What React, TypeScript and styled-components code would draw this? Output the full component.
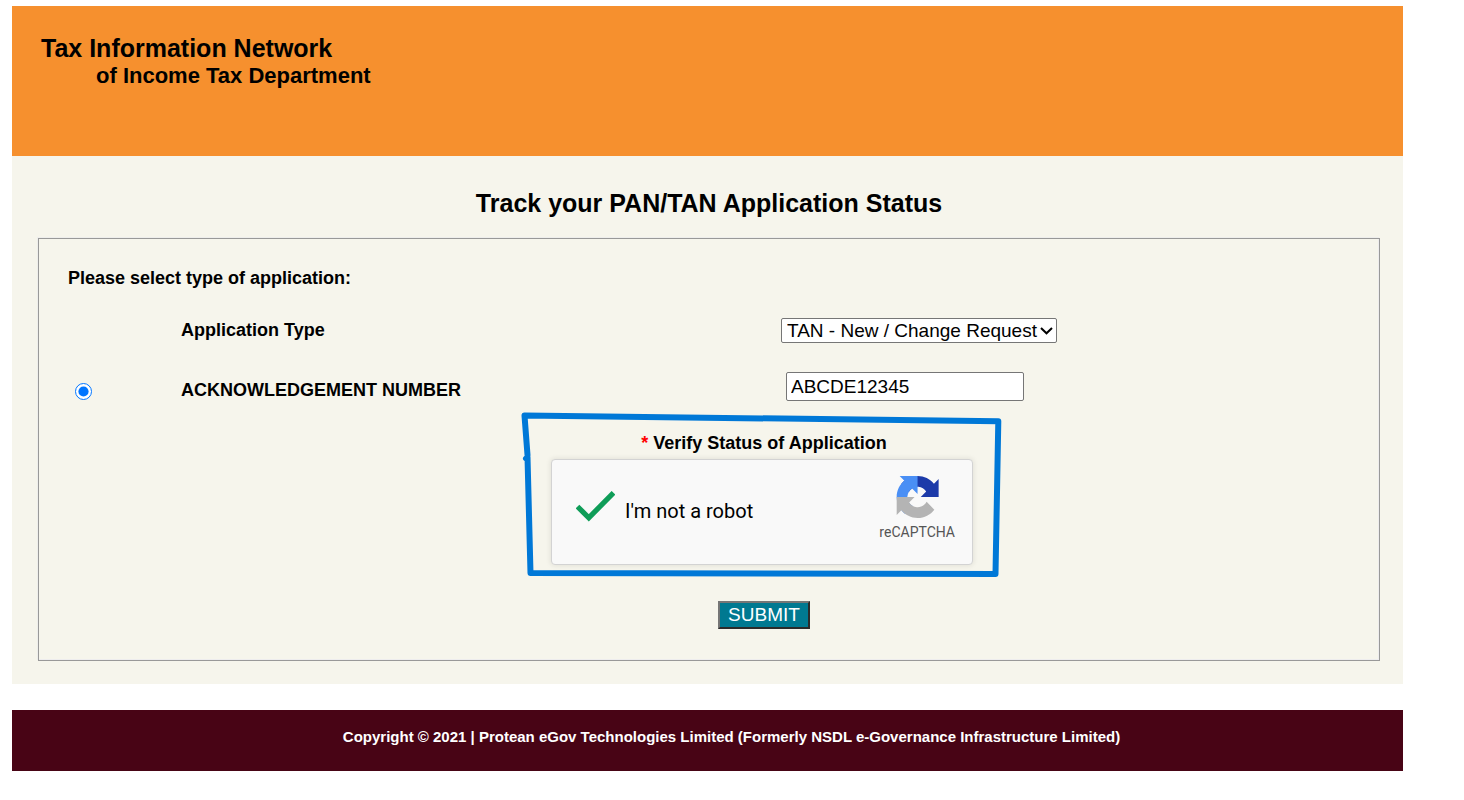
import React, { useState } from "react";
import styled, { createGlobalStyle } from "styled-components";

const GlobalStyle = createGlobalStyle`
  *, *::before, *::after {
    box-sizing: border-box;
  }
  body {
    margin: 0;
    background: #ffffff;
    color: #000000;
    font-family: "Liberation Sans", Arial, sans-serif;
  }
`;

const Page = styled.div`
  padding: 6px 61px 28px 12px;
`;

const Banner = styled.header`
  min-height: 150px;
  padding: 28px 29px;
  background: #f6902e;
  font-weight: bold;
`;

const BannerTitle = styled.div`
  font-size: 25px;
  line-height: 28px;
`;

const BannerSubtitle = styled.div`
  padding-left: 55px;
  font-size: 22px;
  line-height: 28px;
`;

const Main = styled.main`
  padding: 32px 23px 23px 26px;
  background: #f6f5ec;
`;

const PageTitle = styled.h1`
  margin: 0 0 20px;
  font-size: 25px;
  line-height: 30px;
  text-align: center;
`;

const Form = styled.form`
  display: flex;
  flex-direction: column;
  padding: 27px 32px 31px 29px;
  border: 1px solid #999999;
  box-shadow: inset -1px -1px 0 #eeedee, -1px -1px 0 #eeeeec;
`;

const FormTitle = styled.h2`
  margin: 0 0 28px;
  font-size: 18px;
  line-height: 24px;
`;

const Row = styled.div<{ $align: "start" | "end" }>`
  display: grid;
  grid-template-columns: 113px minmax(0, 600px) 1fr;
  align-items: ${({ $align }) => $align};
  margin-bottom: 29px;
`;

const FieldLabel = styled.label`
  grid-column: 2;
  font-size: 18px;
  font-weight: bold;
  line-height: 24px;
`;

const Radio = styled.input`
  width: 17px;
  height: 17px;
  margin: 0 0 2px 7px;
`;

const SelectBox = styled.div`
  position: relative;
  justify-self: start;
  width: 276px;
  height: 25px;
`;

const Select = styled.select`
  display: block;
  width: 100%;
  height: 100%;
  padding: 0 16px 0 5px;
  appearance: none;
  border: 1px solid #767676;
  border-radius: 2px;
  background-color: #ffffff;
  color: #000000;
  font-family: inherit;
  font-size: 19px;
`;

const Chevron = styled.svg`
  position: absolute;
  top: 8px;
  right: 4px;
  width: 14px;
  height: 9px;
  pointer-events: none;
`;

const TextInput = styled.input`
  width: 238px;
  height: 29px;
  margin: 0 0 1px 5px;
  padding: 0 4px;
  border: 1px solid #767676;
  border-radius: 2px;
  background: #ffffff;
  color: #000000;
  font-family: inherit;
  font-size: 19px;
`;

const Verification = styled.div`
  display: flex;
  flex-direction: column;
  align-items: center;
  margin-left: 113px;
`;

const CaptchaGroup = styled.div`
  position: relative;
  width: 426px;
  margin-bottom: 36px;
`;

const CaptchaTitle = styled.p`
  margin: 0 0 4px;
  font-size: 18px;
  font-weight: bold;
  line-height: 24px;
  text-align: center;
`;

const Required = styled.span`
  color: #ff0000;
`;

const CaptchaCard = styled.div`
  display: flex;
  justify-content: space-between;
  width: 422px;
  height: 106px;
  padding: 0 17px 0 24px;
  border: 1px solid #d3d3d3;
  border-radius: 4px;
  background: #f9f9f9;
  box-shadow: 0 0 5px 1px rgba(0, 0, 0, 0.08);
  font-family: Roboto, sans-serif;
`;

const RobotCheck = styled.label`
  display: flex;
  align-items: center;
  gap: 10px;
  padding-bottom: 2px;
  font-size: 20px;
  line-height: 24px;
`;

const HiddenCheckbox = styled.input`
  position: absolute;
  width: 1px;
  height: 1px;
  margin: 0;
  opacity: 0;
`;

const CheckMark = styled.svg<{ $visible: boolean }>`
  width: 39px;
  height: 40px;
  visibility: ${({ $visible }) => ($visible ? "visible" : "hidden")};
`;

const CaptchaBrand = styled.div`
  display: flex;
  flex-direction: column;
  align-items: center;
  gap: 4px;
  padding-top: 16px;
  color: #555555;
  font-size: 14px;
  line-height: 20px;
`;

const BrandLogo = styled.svg`
  width: 42px;
  height: 42px;
`;

const Highlight = styled.svg`
  position: absolute;
  top: -20px;
  left: -30px;
  width: 484px;
  height: 170px;
  pointer-events: none;
`;

const SubmitButton = styled.button`
  width: 92px;
  height: 28px;
  padding: 0;
  border: 2px solid;
  border-color: #767676 #2b2b2b #2b2b2b #767676;
  background: #007991;
  color: #ffffff;
  font-family: inherit;
  font-size: 19px;
  line-height: 24px;
`;

const Footer = styled.footer`
  margin-top: 26px;
  padding: 17px 0 24px 48px;
  background: #480415;
  color: #ffffff;
  font-size: 15px;
  font-weight: bold;
  line-height: 20px;
  text-align: center;
`;

export default function App() {
  const [applicationType, setApplicationType] = useState("tan");
  const [acknowledgement, setAcknowledgement] = useState("ABCDE12345");
  const [verified, setVerified] = useState(true);

  return (
    <>
      <GlobalStyle />
      <Page>
        <Banner>
          <BannerTitle>Tax Information Network</BannerTitle>
          <BannerSubtitle>of Income Tax Department</BannerSubtitle>
        </Banner>

        <Main>
          <PageTitle>Track your PAN/TAN Application Status</PageTitle>
          <Form onSubmit={(event) => event.preventDefault()}>
            <FormTitle>Please select type of application:</FormTitle>

            <Row $align="start">
              <FieldLabel htmlFor="application-type">Application Type</FieldLabel>
              <SelectBox>
                <Select
                  id="application-type"
                  value={applicationType}
                  onChange={(event) => setApplicationType(event.target.value)}
                >
                  <option value="tan">TAN - New / Change Request</option>
                </Select>
                <Chevron viewBox="0 0 14 9" aria-hidden="true">
                  <path d="M2 2L7.500 7.300L13 2" fill="none" stroke="#000000" strokeWidth="2" />
                </Chevron>
              </SelectBox>
            </Row>

            <Row $align="end">
              <Radio
                type="radio"
                id="by-acknowledgement"
                name="search-by"
                aria-label="ACKNOWLEDGEMENT NUMBER"
                defaultChecked
              />
              <FieldLabel htmlFor="acknowledgement">ACKNOWLEDGEMENT NUMBER</FieldLabel>
              <TextInput
                type="text"
                id="acknowledgement"
                value={acknowledgement}
                onChange={(event) => setAcknowledgement(event.target.value)}
              />
            </Row>

            <Verification>
              <CaptchaGroup>
                <CaptchaTitle>
                  <Required>*</Required> Verify Status of Application
                </CaptchaTitle>
                <CaptchaCard>
                  <RobotCheck htmlFor="not-a-robot">
                    <HiddenCheckbox
                      type="checkbox"
                      id="not-a-robot"
                      checked={verified}
                      onChange={(event) => setVerified(event.target.checked)}
                    />
                    <CheckMark $visible={verified} viewBox="0 0 39 40" aria-hidden="true">
                      <path
                        d="M1.5 15.5L12.8 26.8L37.5 1.8"
                        fill="none"
                        stroke="#0f9d58"
                        strokeWidth="5.2"
                      />
                    </CheckMark>
                    I'm not a robot
                  </RobotCheck>
                  <CaptchaBrand>
                    <BrandLogo viewBox="-1 0 64 64" aria-hidden="true" overflow="visible">
                      <path
                        fill="#1c3aa9"
                        d="M64 31.955l-.033-1.37V4.687l-7.16 7.16C50.948 4.674 42.033.093 32.05.093c-10.4 0-19.622 4.96-25.458 12.64l11.736 11.86a15.55 15.55 0 0 1 4.754-5.334c2.05-1.6 4.952-2.906 8.968-2.906.485 0 .86.057 1.135.163 4.976.393 9.288 3.14 11.828 7.124l-8.307 8.307L64 31.953"
                      />
                      <path
                        fill="#4a8ff5"
                        d="M31.862.094l-1.37.033H4.594l7.16 7.16C4.58 13.147 0 22.06 0 32.046c0 10.4 4.96 19.622 12.64 25.458L24.5 45.768a15.55 15.55 0 0 1-5.334-4.754c-1.6-2.05-2.906-4.952-2.906-8.968 0-.485.057-.86.163-1.135.393-4.976 3.14-9.288 7.124-11.828l8.307 8.307L31.86.095"
                      />
                      <path
                        fill="#b4b4b4"
                        d="M.001 32.045l.033 1.37v25.898l7.16-7.16c5.86 7.173 14.774 11.754 24.76 11.754 10.4 0 19.622-4.96 25.458-12.64l-11.736-11.86a15.55 15.55 0 0 1-4.754 5.334c-2.05 1.6-4.952 2.906-8.968 2.906-.485 0-.86-.057-1.135-.163-4.976-.393-9.288-3.14-11.828-7.124l8.307-8.307c-10.522.04-22.4.066-27.295-.005"
                      />
                    </BrandLogo>
                    reCAPTCHA
                  </CaptchaBrand>
                </CaptchaCard>
                <Highlight viewBox="0 0 484 170" aria-hidden="true">
                  <path
                    d="M5 47.5L6.500 46L9.500 162L474.500 163L477.300 10.200L3.500 4.500L6.500 44"
                    fill="none"
                    stroke="#0078d7"
                    strokeWidth="6"
                    strokeLinecap="round"
                    strokeLinejoin="round"
                  />
                </Highlight>
              </CaptchaGroup>
              <SubmitButton type="submit">SUBMIT</SubmitButton>
            </Verification>
          </Form>
        </Main>

        <Footer>
          Copyright © 2021 | Protean eGov Technologies Limited (Formerly NSDL e-Governance
          Infrastructure Limited)
        </Footer>
      </Page>
    </>
  );
}
